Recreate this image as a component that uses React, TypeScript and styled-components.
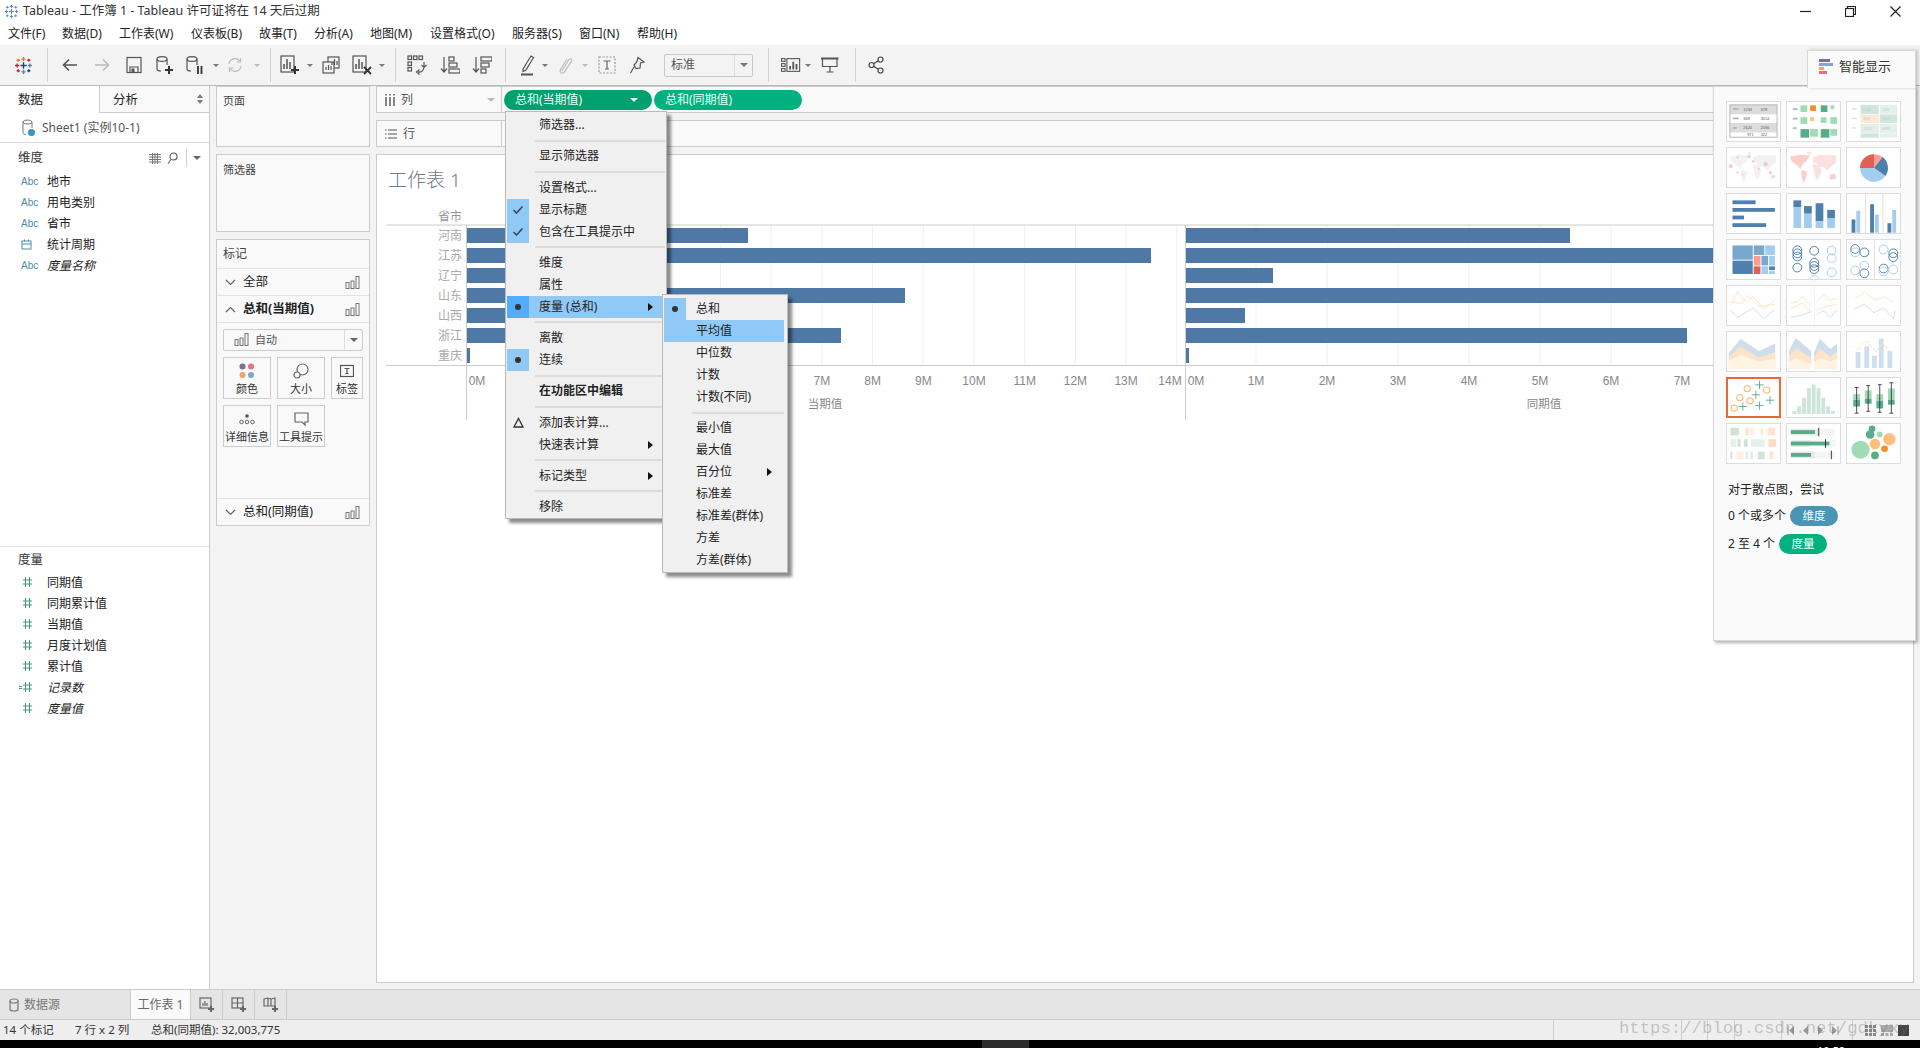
import React from "react";
import styled, { createGlobalStyle } from "styled-components";

const FONT = `"Noto Sans", "Noto Sans CJK SC", "Liberation Sans", sans-serif`;
const Global = createGlobalStyle`
  html, body { margin: 0; padding: 0; overflow: hidden; background: #fff; }
  * { box-sizing: border-box; }
  body { font-family: ${FONT}; font-size: 12px; color: #222; }
`;

const Page = styled.div`position: relative; width: 1920px; height: 1048px; display: flex; flex-direction: column; overflow: hidden; line-height: 1;`;
const TitleBar = styled.div`height: 22px; display: flex; align-items: center; background: #fff; padding-left: 4px; gap: 4px; font-size: 12.5px; color: #333;`;
const WindowButtons = styled.div`margin-left: auto; display: flex; align-items: center; padding-right: 19px; gap: 34px;`;
const MenuBar = styled.div`height: 23px; display: flex; align-items: center; background: #fff; font-size: 12px; padding-left: 8px;`;
const MenuEntry = styled.span<{ $w: number }>`width: ${p => p.$w}px; white-space: nowrap; color: #222;`;
const Toolbar = styled.div`height: 41px; display: flex; align-items: center; background: #f3f3f3; border-bottom: 1px solid #b9b9b9; padding-left: 13px;`;
const Tool = styled.div<{ $ml: number; $w?: number }>`margin-left: ${p => p.$ml}px; width: ${p => p.$w ?? 20}px; height: 24px; display: flex; align-items: center; justify-content: center; flex: none;`;
const ToolSep = styled.div<{ $ml: number }>`margin-left: ${p => p.$ml}px; width: 1px; height: 34px; background: #d0d0d0; flex: none;`;
const HeadSep = styled.div`margin-left: 2px; width: 1px; height: 18px; background: #d0d0d0; flex: none;`;
const Caret = styled.i<{ $c?: string; $s?: number }>`display: block; width: 0; height: 0; border-left: ${p => p.$s ?? 4}px solid transparent; border-right: ${p => p.$s ?? 4}px solid transparent; border-top: ${p => p.$s ?? 4}px solid ${p => p.$c ?? "#777"};`;
const SelectBox = styled.div`margin-left: 17px; width: 89px; height: 23px; flex: none; display: flex; align-items: center; background: #f3f3f3; border: 1px solid #c9c9c9; border-radius: 2px; padding-left: 6px; font-size: 12px; color: #555;`;
const SelectArrow = styled.div`margin-left: auto; width: 18px; height: 100%; border-left: 1px solid #ddd; display: flex; align-items: center; justify-content: center;`;

const Main = styled.div`height: 903px; display: flex; background: #f3f3f3;`;
const LeftPanel = styled.div`width: 210px; flex: none; background: #fff; border-right: 1px solid #ccc; display: flex; flex-direction: column;`;
const TabsRow = styled.div`height: 27px; display: flex;`;
const DataTab = styled.div`width: 100px; padding: 8px 0 0 18px; font-size: 12.5px; background: #fff; border-right: 1px solid #ccc;`;
const AnalysisTab = styled.div`flex: 1; padding: 8px 0 0 13px; font-size: 12.5px; background: #f9f9f9; border-bottom: 1px solid #ccc; display: flex; justify-content: space-between; padding-right: 6px;`;
const SheetRow = styled.div`height: 30px; display: flex; align-items: center; gap: 7px; padding-left: 22px; border-bottom: 1px solid #ddd; color: #555; font-size: 12px;`;
const SectionHead = styled.div`height: 28px; padding-top: 2px; display: flex; align-items: center; padding-left: 18px; padding-right: 8px; font-size: 12.5px; color: #333;`;
const HeadTools = styled.div`margin-left: auto; display: flex; align-items: center; gap: 6px;`;
const FieldList = styled.div<{ $h: number }>`height: ${p => p.$h}px; display: flex; flex-direction: column;`;
const Field = styled.div<{ $it?: boolean }>`height: 21px; flex: none; display: flex; align-items: center; font-style: ${p => (p.$it ? "italic" : "normal")}; color: #222;`;
const FieldIcon = styled.span<{ $pl?: number }>`width: 47px; padding-left: ${p => p.$pl ?? 21}px; flex: none; display: flex; color: #4a8ba8; font-size: 10px; font-family: "Liberation Sans", sans-serif; font-style: normal;`;
const MeasureHead = styled(SectionHead)`border-top: 1px solid #e2e2e2; height: 26px; padding-top: 2px;`;

const MidColumn = styled.div`width: 166px; flex: none; padding: 0 6px; display: flex; flex-direction: column; gap: 7px;`;
const Card = styled.div<{ $h: number }>`height: ${p => p.$h}px; flex: none; background: #f9f9f9; border: 1px solid #ccc; display: flex; flex-direction: column;`;
const CardTitle = styled.div<{ $pt?: number }>`padding: ${p => p.$pt ?? 9}px 0 0 6px; font-size: 11px; color: #444;`;
const MarksTitle = styled.div`height: 29px; display: flex; align-items: center; padding-left: 6px; font-size: 12px; color: #444; border-bottom: 1px solid #e2e2e2;`;
const MarkRow = styled.div<{ $b?: boolean }>`height: 27px; display: flex; align-items: center; padding: 0 9px 0 8px; font-size: 12.5px; font-weight: ${p => (p.$b ? 700 : 400)}; border-bottom: 1px solid #e2e2e2; gap: 7px; color: #222;`;
const MarkEnd = styled.span`margin-left: auto; display: flex;`;
const MarkBody = styled.div`flex: 1; padding: 6px 6px 0; display: flex; flex-direction: column;`;
const MarkSelect = styled.div`height: 22px; background: #f9f9f9; border: 1px solid #ccc; border-radius: 2px; display: flex; align-items: center; padding-left: 10px; padding-bottom: 1px; gap: 6px; font-size: 11px; color: #555;`;
const MarkSelectArrow = styled.div`margin-left: auto; width: 18px; height: 100%; border-left: 1px solid #ddd; display: flex; align-items: center; justify-content: center;`;
const MarkButtons = styled.div`margin-top: 6px; display: grid; grid-template-columns: 48px 48px 32px; grid-auto-rows: 42px; gap: 6px;`;
const MarkButton = styled.div`border: 1px solid #ccc; background: #f9f9f9; display: flex; flex-direction: column; align-items: center; padding-top: 5px; gap: 4px; font-size: 11px; color: #333; white-space: nowrap;`;
const MarkFoot = styled(MarkRow)`border-bottom: none; border-top: 1px solid #e2e2e2; height: 27px;`;

const Work = styled.div`flex: 1; min-width: 0; display: flex; flex-direction: column; padding-right: 6px; gap: 7px;`;
const Shelf = styled.div`height: 27px; flex: none; display: flex; border: 1px solid #ccc; background: #f9f9f9;`;
const ShelfLabel = styled.div`width: 125px; flex: none; display: flex; align-items: center; gap: 6px; padding: 0 6px 0 8px; font-size: 12px; color: #555; border-right: 1px solid #ccc;`;
const ShelfCaret = styled.span`margin-left: auto;`;
const ShelfBody = styled.div`flex: 1; display: flex; align-items: center; gap: 2px; padding-left: 2px;`;
const Pill = styled.div<{ $bg: string; $w: number }>`width: ${p => p.$w}px; height: 20px; border-radius: 10px; background: ${p => p.$bg}; color: #e8fff6; font-size: 12px; display: flex; align-items: center; padding: 0 14px 0 11px; justify-content: space-between;`;
const View = styled.div`height: 829px; flex: none; background: #fff; border: 1px solid #ccc;`;
const SheetTitle = styled.div`height: 35px; padding: 16px 0 0 11px; font-size: 19px; color: #6e7b85; font-weight: 300;`;
const ChartSvg = styled.svg`display: block;`;

const TabBar = styled.div`height: 31px; display: flex; background: #e5e5e5; border-top: 1px solid #ccc; border-bottom: 1px solid #ccc;`;
const SourceTab = styled.div`width: 131px; display: flex; align-items: center; gap: 4px; padding-left: 8px; color: #777; font-size: 12px; border-right: 1px solid #ccc;`;
const ActiveTab = styled.div`width: 60px; background: #fafafa; display: flex; align-items: center; justify-content: center; color: #666; font-size: 12px; border-right: 1px solid #ccc;`;
const NewTab = styled.div`width: 32px; display: flex; align-items: center; justify-content: center; border-right: 1px solid #ccc;`;
const StatusBar = styled.div`height: 20px; display: flex; align-items: center; background: #eee; font-size: 11.5px; color: #333;`;
const StatusText = styled.span<{ $w: number }>`width: ${p => p.$w}px; flex: none; white-space: nowrap;`;
const StatusCell = styled.div<{ $w: number }>`width: ${p => p.$w}px; height: 100%; flex: none; border-left: 1px solid #ccc; display: flex; align-items: center; justify-content: center; gap: 5px;`;
const StatusSpacer = styled.div`flex: 1;`;
const Watermark = styled.div`position: absolute; left: 1619px; top: 1019px; font-family: "Liberation Mono", monospace; font-size: 17.3px; color: rgba(110, 110, 110, 0.36); white-space: nowrap; line-height: 20px;`;
const BlackBar = styled.div`height: 8px; background: #000; display: flex; overflow: hidden;`;
const TaskSlot = styled.div`margin-left: 982px; width: 47px; background: #2b2b2b;`;
const Clock = styled.div`margin-left: 788px; color: #fff; font-size: 11px; padding-top: 5px;`;

const PopMenu = styled.div`position: absolute; left: 505px; top: 111px; width: 162px; background: #f0f0f0; border: 1px solid #b9b9b9; padding: 2px 1px 0; box-shadow: 4px 4px 3px rgba(0, 0, 0, 0.45); z-index: 5;`;
const SubMenu = styled.div`position: absolute; left: 156px; top: 182px; width: 126px; background: #f0f0f0; border: 1px solid #b9b9b9; padding: 3px 3px 1px 1px; box-shadow: 4px 4px 3px rgba(0, 0, 0, 0.45); z-index: 6;`;
const Row = styled.div<{ $hi?: boolean; $b?: boolean }>`height: 22px; display: flex; align-items: center; background: ${p => (p.$hi ? "#90c8f6" : "transparent")}; font-weight: ${p => (p.$b ? 700 : 400)}; color: #222; font-size: 12px; white-space: nowrap;`;
const Gutter = styled.span<{ $on?: "on" | "strong" }>`width: 22px; height: 100%; flex: none; display: flex; align-items: center; justify-content: center; background: ${p => (p.$on === "strong" ? "#52adfd" : p.$on === "on" ? "#90c8f6" : "transparent")}; margin-right: 10px;`;
const Dot = styled.i`width: 6px; height: 6px; border-radius: 50%; background: #333; display: block;`;
const Arrow = styled.i`margin-left: auto; margin-right: 12px; display: block; width: 0; height: 0; border-top: 4px solid transparent; border-bottom: 4px solid transparent; border-left: 5px solid #111;`;
const Sep = styled.div`height: 9.25px; display: flex; align-items: center; padding-left: 28px; &::after { content: ""; display: block; flex: 1; height: 2px; background: #dcdcdc; }`;

const Smart = styled.div`position: absolute; left: 1713px; top: 86px; width: 203px; height: 555px; background: #fafafa; border: 1px solid #d8d8d8; box-shadow: 2px 2px 3px rgba(0, 0, 0, 0.3); padding: 14px 0 0 12px; z-index: 4;`;
const SmartTab = styled.div`position: absolute; right: -1px; top: -37px; width: 109px; height: 38px; background: #fafafa; border: 1px solid #d8d8d8; border-bottom: none; box-shadow: 2px 0 3px rgba(0, 0, 0, 0.2); display: flex; align-items: center; gap: 5px; padding: 0 0 7px 11px; font-size: 13px; color: #333;`;
const SmartGrid = styled.div`display: grid; grid-template-columns: repeat(3, 55px); grid-auto-rows: 41px; gap: 5px;`;
const Thumb = styled.div<{ $sel?: boolean }>`border: ${p => (p.$sel ? "2px solid #e06c37" : "1px solid #ddd")}; background: #fff; display: flex; overflow: hidden;`;
const Hint = styled.div`margin-top: 18px; display: flex; flex-direction: column; gap: 8px; font-size: 12px; color: #222; padding-left: 2px;`;
const HintTitle = styled.div`height: 16px; display: flex; align-items: center; white-space: nowrap;`;
const HintRow = styled.div`display: flex; align-items: center; gap: 4px; height: 20px; white-space: nowrap;`;
const HintPill = styled.span<{ $bg: string }>`width: 48px; height: 20px; border-radius: 10px; background: ${p => p.$bg}; color: #f2fff9; display: flex; align-items: center; justify-content: center; font-size: 11.5px;`;

const Ico = ({ w = 18, h = 18, vb = "0 0 18 18", c = "#555", sw = 1.2, children }: { w?: number; h?: number; vb?: string; c?: string; sw?: number; children: React.ReactNode }) => (
  <svg width={w} height={h} viewBox={vb} fill="none" stroke={c} strokeWidth={sw}>{children}</svg>
);
const Logo = ({ blue = false, s = 18 }: { blue?: boolean; s?: number }) => {
  const c = blue ? ["#5b8fc0", "#5b8fc0", "#5b8fc0", "#5b8fc0"] : ["#e8762b", "#c72035", "#59879b", "#1f457e"];
  const P = (x: number, y: number, r: number, col: string) => <path d={`M${x - r} ${y}H${x + r}M${x} ${y - r}V${y + r}`} stroke={col} strokeWidth={1.3} />;
  return (
    <svg width={s} height={s} viewBox="0 0 18 18" fill="none">
      {P(9, 9, 3, c[3])}{P(9, 3, 2, c[0])}{P(9, 15, 2, c[2])}{P(3, 9, 2, c[1])}{P(15, 9, 2, c[2])}{P(4, 4, 1.5, c[0])}{P(14, 4, 1.5, c[1])}{P(4, 14, 1.5, c[1])}{P(14, 14, 1.5, c[3])}
    </svg>
  );
};
const BarsIcon = ({ c = "#777" }: { c?: string }) => (
  <Ico w={15} h={13} vb="0 0 15 13" c={c} sw={1}><rect x="1" y="6.5" width="3" height="6" /><rect x="6" y="5" width="3" height="7.5" /><rect x="11" y="0.5" width="3" height="12" /></Ico>
);
const Cyl = ({ c = "#666" }: { c?: string }) => <Ico w={12} h={14} vb="0 0 12 14" c={c}><ellipse cx="6" cy="3" rx="4" ry="2" /><path d="M2 3v8c0 1.2 2 2 4 2s4-.8 4-2V3" /></Ico>;
const SheetPlus = () => <Ico w={16} h={16} vb="0 0 16 16" c="#666"><rect x="1" y="1" width="11" height="10" /><path d="M4 9V6M6 9V4M8 9V6" /><path d="M12 9v6M9 12h6" strokeWidth={2} /></Ico>;

const toolIcons: Record<string, React.ReactNode> = {
  back: <Ico><path d="M16 9H3M8 3.5L2.5 9L8 14.5" strokeWidth={1.6} /></Ico>,
  fwd: <Ico c="#bbb"><path d="M2 9h13M10 3.5L15.5 9L10 14.5" strokeWidth={1.6} /></Ico>,
  save: <Ico><rect x="2" y="1.5" width="14" height="15" /><path d="M5 16V11h8v5" /><rect x="6.5" y="12.5" width="3" height="3.5" fill="#555" stroke="none" /></Ico>,
  dsadd: <Ico w={20} h={20} vb="0 0 20 20"><ellipse cx="7" cy="4" rx="5" ry="2.4" /><path d="M2 4v10c0 1.3 2 2 4 2M12 4v6" /><path d="M14 11v8M10 15h8" strokeWidth={2} stroke="#333" /></Ico>,
  dspause: <Ico w={20} h={20} vb="0 0 20 20"><ellipse cx="6" cy="4" rx="5" ry="2.4" /><path d="M1 4v10c0 1.3 2 2 4 2M11 4v6" /><path d="M12 11v8M15.5 11v8" strokeWidth={1.8} stroke="#333" /></Ico>,
  refresh: <Ico c="#bbb"><path d="M3 8a6 6 0 0 1 11-2.5M15 10a6 6 0 0 1-11 2.5" /><path d="M14.5 2v4h-4M3.5 16v-4h4" /></Ico>,
  add: <Ico w={20} h={20} vb="0 0 20 20"><rect x="1" y="1" width="13" height="16" /><path d="M4 14V9M7 14V4M10 14V7" strokeWidth={1.5} /><path d="M15 11v8M11 15h8" strokeWidth={2} stroke="#333" /></Ico>,
  dup: <Ico><rect x="6" y="1" width="11" height="11" /><rect x="1" y="6" width="11" height="11" fill="#f3f3f3" /><path d="M10 9V6M12.5 9V3M15 9V5M4 14v-3M6.5 14V9M9 14v-4" /></Ico>,
  clear: <Ico w={20} h={20} vb="0 0 20 20"><rect x="1" y="1" width="13" height="16" /><path d="M4 14V9M7 14V4M10 14V7" strokeWidth={1.5} /><path d="M12 12l7 7M19 12l-7 7" strokeWidth={1.8} stroke="#333" /></Ico>,
  swap: <Ico w={20} h={20} vb="0 0 20 20"><rect x="1" y="1" width="3.5" height="3.5" /><rect x="6.5" y="1" width="3.5" height="3.5" /><rect x="12" y="1" width="3.5" height="3.5" /><rect x="1" y="7" width="3.5" height="3.5" /><rect x="1" y="12.5" width="3.5" height="3.5" /><path d="M17 7v5a5 5 0 0 1-6 5M14.5 10l2.5 2.5l2.5-2.5M12.5 14.5L9.5 17l3 2.5" /></Ico>,
  asc: <Ico w={20} h={20} vb="0 0 20 20"><path d="M4 2v15M1 13.5L4 17l3-3.5" /><rect x="9" y="2" width="5" height="4" /><rect x="9" y="8" width="8" height="4" /><rect x="9" y="14" width="11" height="4" /></Ico>,
  desc: <Ico w={20} h={20} vb="0 0 20 20"><path d="M4 2v15M1 13.5L4 17l3-3.5" /><rect x="9" y="2" width="11" height="4" /><rect x="9" y="8" width="8" height="4" /><rect x="9" y="14" width="5" height="4" /></Ico>,
  pen: <Ico w={16} h={22} vb="0 0 16 22"><path d="M3 15L11 2l2.5 1.5L6 16l-3 1.5z" /><rect x="1" y="19.5" width="12" height="2" fill="#555" stroke="none" /></Ico>,
  clip: <Ico c="#c4c4c4" sw={1.4}><path d="M6 15L13 3.5c1-1.6 3.5-.4 2.6 1.4L8.5 16c-1.8 2.3-5.5.5-4-2.3L11 3" /></Ico>,
  t: <Ico c="#999"><rect x="1" y="1" width="16" height="16" strokeDasharray="2 1.5" /><path d="M5.5 5h7M9 5v8M7 13h4" stroke="#666" /></Ico>,
  pin: <Ico><path d="M10 1.5l6 4.5-3.5 1-.5 5-4 .5-2-3.5 3-3.5zM6 11l-3.5 6" /></Ico>,
  view: <Ico w={22} h={16} vb="0 0 22 16"><rect x="0.5" y="1" width="4" height="3" /><rect x="0.5" y="6.5" width="4" height="3" /><rect x="0.5" y="12" width="4" height="3" /><rect x="6.5" y="1" width="14" height="14" /><path d="M10 13V9M13.5 13V4.5M17 13V7" strokeWidth={2} /></Ico>,
  present: <Ico w={18} h={16} vb="0 0 18 16"><path d="M0 1.5h17.5" strokeWidth={2} /><path d="M1.5 2v7.5h14.5V2M9 9.5V15M5.5 15h7" /></Ico>,
  share: <Ico c="#444"><circle cx="12.5" cy="3.5" r="2.5" /><circle cx="3.5" cy="9" r="2.5" /><circle cx="12.5" cy="14.5" r="2.5" /><path d="M5.6 7.7l4.8-3M5.6 10.3l4.8 3" /></Ico>,
};

const toolbar: [string, number][] = [
  ["logo", 0], ["sep", 14], ["back", 12], ["fwd", 12], ["save", 12], ["dsadd", 11], ["dspause", 11], ["c", 6], ["refresh", 5], ["cl", 8], ["sep", 9],
  ["add", 9], ["c", 6], ["dup", 7], ["clear", 11], ["c", 6], ["sep", 9], ["swap", 11], ["asc", 13], ["desc", 12], ["sep", 13], ["pen", 12], ["c", 3], ["clip", 6], ["cl", 6], ["t", 8], ["pin", 10],
  ["select", 0], ["sep", 15], ["view", 12], ["c", 3], ["present", 8], ["sep", 15], ["share", 11],
];

const menuNames: [string, number][] = [["文件(F)", 54], ["数据(D)", 57], ["工作表(W)", 72], ["仪表板(B)", 68], ["故事(T)", 55], ["分析(A)", 56], ["地图(M)", 60], ["设置格式(O)", 82], ["服务器(S)", 67], ["窗口(N)", 58], ["帮助(H)", 60]];

const Check = () => <Ico w={12} h={10} vb="0 0 12 10" c="#3a4a5a" sw={1.6}><path d="M1.5 5l3 3L10.5 1.5" /></Ico>;
const Delta = () => <svg width="11" height="11" viewBox="0 0 11 11" fill="none" stroke="#333" strokeWidth="1.3"><path d="M5.5 1.5L10 10H1z" /></svg>;

const Hash = ({ eq }: { eq?: boolean }) => (
  <svg width="24" height="13" viewBox="0 0 24 13" fill="none" stroke="#3f9a78" strokeWidth="1">
    {eq && <path d="M0 5.5h3M0 7.5h3" />}
    <path d="M6.5 1v10M10.5 1v10M4 4h9M4 8h9" />
  </svg>
);
const CalIcon = () => <Ico w={11} h={11} vb="0 0 11 11" c="#4a8ba8" sw={1}><rect x="1" y="2" width="9" height="8" /><path d="M1 5h9M3.5 0.5v2M7.5 0.5v2" /></Ico>;

/* thumbnails */
const B = "#4e80ae", L = "#a3cdef", M = "#7aa7cc", G = "#58ad88", LG = "#9fdbb4", PG = "#cde5d9", O = "#f68e24", LO = "#ffc07f", R = "#e15f55", PK = "#ff9c93", PO = "#fde3c8", PB = "#cfdeec", VPO = "#fff3e3";
type RectT = [number, number, number, number, string];
const Rs = ({ r }: { r: RectT[] }) => <>{r.map(([x, y, w, h, f], i) => <rect key={i} x={x} y={y} width={w} height={h} fill={f} />)}</>;
const Circles = ({ c }: { c: [number, number, string][] }) => <>{c.map(([x, y, s], i) => <circle key={i} cx={x} cy={y} r={4.6} fill="none" stroke={s} strokeWidth={1} />)}</>;
const Line = ({ p, c, w = 1 }: { p: string; c: string; w?: number }) => <polyline points={p} fill="none" stroke={c} strokeWidth={w} />;
const Slice = ({ a, b, f }: { a: number; b: number; f: string }) => {
  const rad = (d: number) => ((d - 90) * Math.PI) / 180;
  const cx = 28, cy = 21, r = 14.5;
  const pt = (d: number) => `${cx + r * Math.cos(rad(d))} ${cy + r * Math.sin(rad(d))}`;
  return <path d={`M${cx} ${cy}L${pt(a)}A${r} ${r} 0 ${b - a > 180 ? 1 : 0} 1 ${pt(b)}Z`} fill={f} />;
};
const World = ({ f, f2 }: { f: string; f2: string }) => (
  <g fill={f}>
    <path d="M3 9L14 7L24 8L20 14L16 17L14 22L10 18L5 14Z" fill={f2} />
    <path d="M15 23L21 25L19 33L17 37L15 30Z" fill={f2} />
    <path d="M20 4L26 4L23 8Z" />
    <path d="M27 10L34 7L51 8L51 15L45 20L42 24L38 20L34 20L31 16L27 15Z" />
    <path d="M26 17L33 18L36 23L33 32L30 33L28 24Z" />
    <path d="M44 28L50 27L51 32L45 33Z" fill={f2} />
  </g>
);
const TT = styled.text`font-family: "Liberation Sans", sans-serif; font-size: 4px;`;

const thumbs: React.ReactNode[] = [
  <><Rs r={[[3, 3, 49, 10, "#dcdcdc"], [3, 22, 49, 10, "#dcdcdc"], [6, 6.5, 6, 1.6, "#aaa"], [6, 16.5, 6, 1.6, "#aaa"], [6, 26.5, 4, 1.6, "#aaa"]]} /><rect x="3" y="3" width="49" height="34" fill="none" stroke="#b5b5b5" />
    <g fill="#555"><TT x="17" y="9">1234</TT><TT x="35" y="9">678</TT><TT x="17" y="19">368</TT><TT x="35" y="19">3014</TT><TT x="17" y="28">2620</TT><TT x="35" y="28">2556</TT><TT x="21" y="36">971</TT><TT x="35" y="36">322</TT></g></>,
  <Rs r={[[6, 6.5, 5, 2, "#bbb"], [6, 16.5, 5, 2, "#bbb"], [6, 26.5, 4, 2, "#bbb"], [14, 3.5, 7, 7, LG], [24, 3.5, 6, 6, O], [35, 3.5, 7, 7, G], [45, 3.5, 4, 4, LG], [14, 16, 7, 7, LG], [24, 16, 4, 4, LO], [35, 16, 6, 6, LG], [45, 16, 7, 7, LG], [14, 28.5, 9, 9, G], [24, 28.5, 8, 8, LG], [35, 28.5, 9, 9, G], [45, 28.5, 7, 7, LG]]} />,
  <><Rs r={[[3, 3, 10, 35, "#fff"], [14, 3, 19, 9.5, "#d0e6dc"], [34, 3, 18, 9.5, "#e4f1ea"], [14, 13, 19, 9, "#ffe9d6"], [34, 13, 18, 9, "#d0e6dc"], [14, 23, 19, 9.5, "#e4f1ea"], [34, 23, 18, 9.5, "#e4f1ea"], [14, 33, 19, 4.5, "#d0e6dc"], [34, 33, 18, 4.5, "#e4f1ea"], [5, 6.5, 5, 1.5, "#ddd"], [5, 16.5, 5, 1.5, "#ddd"], [5, 26.5, 4, 1.5, "#ddd"]]} />
    <g fill="#bcc"><TT x="16" y="9">1234</TT><TT x="37" y="9">546</TT><TT x="17" y="19">368</TT><TT x="37" y="19">340</TT><TT x="17" y="29">2620</TT><TT x="36" y="29">5690</TT></g></>,
  <><World f="#f2f2f2" f2="#f2f2f2" />{[[4, 19, 2], [11, 10, 1.2], [23, 9, 1.6], [27, 14, 1.2], [40, 17, 2.2], [45, 26, 1.6], [11, 26, 1.2], [16, 28, 1], [48, 30, 1.2], [33, 22, 1]].map(([x, y, r], i) => <circle key={i} cx={x} cy={y} r={r} fill="#f4c6c4" />)}</>,
  <World f="#fde0e0" f2="#f8cfcb" />,
  <><Slice a={0} b={38} f={PK} /><Slice a={38} b={125} f={B} /><Slice a={125} b={270} f={L} /><Slice a={270} b={360} f={R} /></>,
  <Rs r={[[5.7, 6.7, 24, 4, B], [5.7, 14.7, 44, 4, B], [5.7, 22.7, 12, 4, B], [5.7, 30.7, 35, 4, B]]} />,
  <Rs r={[[6.7, 6.7, 8, 7, B], [6.7, 13.7, 8, 22, L], [17.7, 12.7, 8, 8, B], [17.7, 20.7, 8, 15, L], [29.7, 9.7, 8, 19, B], [29.7, 28.7, 8, 7, L], [41.7, 16.7, 8, 9, B], [41.7, 25.7, 8, 10, L]]} />,
  <Rs r={[[19, 0, 0.6, 41, "#ccc"], [37, 0, 0.6, 41, "#ccc"], [4.7, 26.7, 4, 14, B], [9.7, 17.7, 4, 23, L], [24, 10.7, 4, 30, B], [29, 21.7, 4, 19, L], [42, 30.7, 4, 10, B], [47, 16.7, 4, 24, L]]} />,
  <Rs r={[[5.7, 5.7, 21, 15, M], [5.7, 21.7, 21, 14, B], [27.7, 5.7, 11, 10, M], [39.7, 5.7, 10, 10, L], [27.7, 16.7, 7, 10, PK], [35.7, 16.7, 7, 10, M], [43.7, 16.7, 6, 10, L], [27.7, 27.7, 7, 8, R], [35.7, 27.7, 7, 8, L], [43.7, 27.7, 6, 4, B], [43.7, 32.7, 6, 3, L]]} />,
  <Circles c={[[10.7, 10.7, B], [10.7, 14, B], [10.7, 17.3, B], [10.7, 29, B], [28.3, 11.3, B], [28.3, 24, B], [28.3, 27.3, B], [28.3, 30.7, B], [28.3, 42, L], [46.3, 11.3, L], [46.3, 19, L], [46.3, 34, L]]} />,
  <><Rs r={[[28, 0, 0.6, 41, "#ccc"]]} /><Circles c={[[8.5, 9.5, B], [8.5, 13, L], [18, 13, B], [18, 27, L], [8.5, 32, L], [18, 35, B], [38, 10, L], [48, 14, B], [48, 18, B], [38, 30, B], [38, 33, L], [48, 31, L]]} /></>,
  <><Line p="4,20 11,6 20,17 27,11 38,24 50,14" c={PO} /><Line p="4,16 14,19 22,10 34,22 50,19" c={PO} /><Line p="4,26 11,33 27,23 38,34 50,25" c={PB} /></>,
  <><Rs r={[[28, 0, 0.5, 41, "#e8e8e8"]]} /><Line p="4,18 11,16 16,11 25,21" c={PO} /><Line p="4,24 16,18 25,28" c={PO} /><Line p="4,33 14,31 25,27" c={PB} /><Line p="31,17 38,9 45,15 52,13" c={PO} /><Line p="31,25 39,22 52,19" c={PO} /><Line p="31,30 38,26 45,33 52,25" c={PB} /></>,
  <><Rs r={[[2, 5, 3, 0.6, "#eee"], [2, 12, 3, 0.6, "#eee"], [2, 20, 3, 0.6, "#eee"], [2, 28, 3, 0.6, "#eee"], [50, 5, 3, 0.6, "#eee"], [50, 12, 3, 0.6, "#eee"], [50, 20, 3, 0.6, "#eee"], [50, 28, 3, 0.6, "#eee"]]} /><Line p="8,14 18,6 30,15 38,11 48,17" c={PO} /><Line p="8,24 18,19 28,28 38,23 48,34 50,26" c={PB} /></>,
  <><path d="M2 22L14 7L33 20L50 12V38H2Z" fill={PB} /><path d="M2 26L14 15L33 27L50 21V38H2Z" fill={PO} /><path d="M2 30L14 24L33 31L50 28V38H2Z" fill={VPO} /></>,
  <><path d="M2 20L9 6L25 20V38H2Z" fill={PB} /><path d="M2 26L9 17L25 27V38H2Z" fill={PO} /><path d="M2 31L9 27L25 33V38H2Z" fill={VPO} /><path d="M28 22L34 7L45 18L52 12V38H28Z" fill={PB} /><path d="M28 27L34 17L45 26L52 20V38H28Z" fill={PO} /><path d="M28 32L34 27L45 31L52 28V38H28Z" fill={VPO} /></>,
  <><Rs r={[[9, 21, 5, 17, PB], [18, 15, 5, 23, PB], [26, 25, 5, 13, PB], [33, 7, 5, 31, PB], [42, 20, 5, 18, PB], [2, 5, 3, 0.6, "#eee"], [2, 15, 3, 0.6, "#eee"], [2, 25, 3, 0.6, "#eee"], [50, 5, 3, 0.6, "#eee"], [50, 15, 3, 0.6, "#eee"], [50, 25, 3, 0.6, "#eee"]]} /><Line p="9,20 20,9 30,21 37,12 46,22" c={PO} /></>,
  <><g fill="none" stroke="#f9a34c" strokeWidth="1"><circle cx="20.7" cy="10.7" r="3.5" /><circle cx="41.7" cy="12.3" r="3.5" /><circle cx="12.7" cy="20.7" r="3.5" /><circle cx="23.7" cy="24.3" r="3.5" /><circle cx="6.7" cy="32.3" r="3.5" /></g>
    <path d="M34 2v9M29.5 6.5h9M30 13v9M25.5 17.5h9M45.3 19v9M40.8 23.5h9M16 26v9M11.5 30.5h9M34 25v9M29.5 29.5h9" stroke={G} strokeWidth="1" fill="none" /></>,
  <Rs r={[[5.7, 34.7, 4, 3, PG], [10.7, 29.7, 4, 8, PG], [15.7, 20.7, 4, 17, PG], [20.7, 10.7, 4, 27, PG], [25.7, 6.7, 4, 31, PG], [30.7, 10.7, 4, 27, PG], [35.7, 20.7, 4, 17, PG], [40.7, 29.7, 4, 8, PG], [45.7, 34.7, 4, 3, PG]]} />,
  <><Rs r={[[6.5, 17, 7, 6, LG], [6.5, 23, 7, 7, G], [18.5, 13, 7, 9, LG], [18.5, 22, 7, 5, G], [30.5, 17, 7, 7, LG], [30.5, 24, 7, 8, G], [42.5, 11, 7, 12, LG], [42.5, 23, 7, 5, G]]} /><path d="M10 10v27M8 10h4M8 37h4M22 8v27M20 8h4M20 35h4M34 7v29M32 7h4M32 36h4M46 5v32M44 5h4M44 37h4" stroke="#333" strokeWidth="0.9" fill="none" /></>,
  <Rs r={[[3.5, 4, 9, 8, PG], [19, 4, 4, 8, "#ffe5cf"], [24, 4, 4, 8, "#fff0e2"], [35, 4, 2, 8, "#ffe5cf"], [42, 4, 8, 8, "#ffe5cf"], [3.5, 16, 6, 8, "#e4f1ea"], [11, 16, 3, 8, PG], [17.5, 16, 4, 8, PG], [25, 16, 14, 8, "#e4f1ea"], [43, 16, 8, 8, "#ffdcc0"], [3.5, 29, 2, 8, PG], [9, 29, 8, 8, "#fff0e2"], [19, 29, 3, 8, "#e4f1ea"], [24, 29, 3, 8, "#e4f1ea"], [32, 29, 7, 8, PG], [44, 29, 4, 8, "#ffe5cf"]]} />,
  <Rs r={[[4, 5, 46, 7, "#f5f5f5"], [4, 5, 30, 7, "#e8e8e8"], [4, 6.5, 25, 4, G], [32.5, 4, 0.9, 9, "#222"], [4, 17, 46, 7, "#f5f5f5"], [4, 17, 20, 7, "#e8e8e8"], [4, 18.5, 40, 4, G], [39.5, 16, 0.9, 9, "#222"], [4, 29, 46, 7, "#f5f5f5"], [4, 29, 25, 7, "#e8e8e8"], [4, 30.5, 21, 4, G], [45.5, 28, 0.9, 9, "#222"]]} />,
  <>{[[15, 27, 9.5, LG], [27, 5, 3.5, G], [25, 11, 4.5, G], [30, 21, 5.5, LO], [35, 11, 3, LG], [45, 16, 6.5, LO], [40, 26, 3.5, O], [30, 33, 4, G]].map(([x, y, r, f], i) => <circle key={i} cx={(x as number) - 1} cy={y as number} r={r as number} fill={f as string} />)}</>,
];

const rows: [string, number, number][] = [["河南", 748, 1570], ["江苏", 1151, 1713], ["辽宁", 600, 1273], ["山东", 905, 1713], ["山西", 560, 1245], ["浙江", 841, 1687], ["重庆", 470, 1189]];

const Chart = () => (
  <ChartSvg width="1535" height="260" viewBox="377 190 1535 260">
    <g stroke="#f0f0f0">
      {Array.from({ length: 14 }, (_, i) => <line key={i} x1={467 + (i + 1) * 50.7} x2={467 + (i + 1) * 50.7} y1="225" y2="365" />)}
      {Array.from({ length: 7 }, (_, i) => <line key={i} x1={1185 + (i + 1) * 71} x2={1185 + (i + 1) * 71} y1="225" y2="365" />)}
    </g>
    <g fontFamily={`"Noto Sans CJK SC", sans-serif`} fontSize="12" fill="#aaa" textAnchor="end">
      <text x="462" y="221" fill="#999">省市</text>
      {rows.map(([n], i) => <text key={n} x="462" y={240 + i * 20}>{n}</text>)}
    </g>
    {rows.map(([n, a, b], i) => (
      <g key={n} fill="#4e79a7">
        <rect x="467" y={228 + i * 20} width={a - 467} height="15" />
        <rect x="1186" y={228 + i * 20} width={b - 1186} height="15" />
      </g>
    ))}
    <g stroke="#ccc">
      <line x1="386" x2="1912" y1="225" y2="225" />
      <line x1="386" x2="1912" y1="365.5" y2="365.5" />
      <line x1="466.5" x2="466.5" y1="225" y2="420" />
      <line x1="1185.5" x2="1185.5" y1="225" y2="420" />
    </g>
    <g fontFamily={`"Liberation Sans", sans-serif`} fontSize="12" fill="#888" textAnchor="middle">
      <text x="477" y="385">0M</text>
      {[7, 8, 9, 10, 11, 12, 13, 14].map(m => <text key={m} x={m === 14 ? 1170 : 467 + m * 50.7} y="385">{m}M</text>)}
      {[0, 1, 2, 3, 4, 5, 6, 7].map(m => <text key={m} x={m === 0 ? 1196 : 1185 + m * 71} y="385">{m}M</text>)}
    </g>
    <g fontFamily={`"Noto Sans CJK SC", sans-serif`} fontSize="11.5" fill="#888" textAnchor="middle">
      <text x="825" y="408">当期值</text>
      <text x="1544" y="408">同期值</text>
    </g>
  </ChartSvg>
);

const dims: [string, string | null, boolean][] = [["地市", "Abc", false], ["用电类别", "Abc", false], ["省市", "Abc", false], ["统计周期", null, false], ["度量名称", "Abc", true]];
const measures: [string, boolean, boolean][] = [["同期值", false, false], ["同期累计值", false, false], ["当期值", false, false], ["月度计划值", false, false], ["累计值", false, false], ["记录数", true, true], ["度量值", false, true]];
const Chev = ({ up }: { up?: boolean }) => <Ico w={11} h={7} vb="0 0 11 7" c="#666"><path d={up ? "M1 6l4.5-4.5L10 6" : "M1 1l4.5 4.5L10 1"} /></Ico>;

export default function App() {
  return (
    <Page>
      <Global />
      <TitleBar>
        <Logo blue s={15} />
        <span>Tableau - 工作簿 1 - Tableau 许可证将在 14 天后过期</span>
        <WindowButtons>
          <Ico w={11} h={11} vb="0 0 11 11" c="#222"><path d="M0 5.5h11" /></Ico>
          <Ico w={11} h={11} vb="0 0 11 11" c="#222"><rect x="0.5" y="2.5" width="8" height="8" /><path d="M2.5 2.5V0.5h8v8h-2" /></Ico>
          <Ico w={11} h={11} vb="0 0 11 11" c="#222"><path d="M0.5 0.5l10 10M10.5 0.5l-10 10" /></Ico>
        </WindowButtons>
      </TitleBar>
      <MenuBar>{menuNames.map(([n, w]) => <MenuEntry key={n} $w={w}>{n}</MenuEntry>)}</MenuBar>
      <Toolbar>
        {toolbar.map(([k, ml], i) => {
          if (k === "sep") return <ToolSep key={i} $ml={ml} />;
          if (k === "c" || k === "cl") return <Tool key={i} $ml={ml} $w={8}><Caret $s={3} $c={k === "c" ? "#777" : "#bbb"} /></Tool>;
          if (k === "select") return <SelectBox key={i}>标准<SelectArrow><Caret $s={4} /></SelectArrow></SelectBox>;
          if (k === "logo") return <Tool key={i} $ml={ml}><Logo s={19} /></Tool>;
          return <Tool key={i} $ml={ml}>{toolIcons[k]}</Tool>;
        })}
      </Toolbar>
      <Main>
        <LeftPanel>
          <TabsRow>
            <DataTab>数据</DataTab>
            <AnalysisTab>分析<svg width="6" height="10" viewBox="0 0 6 10" fill="#777"><path d="M3 0L6 4H0zM3 10L0 6h6z" /></svg></AnalysisTab>
          </TabsRow>
          <SheetRow>
            <svg width="13" height="18" viewBox="0 0 13 18" fill="none" stroke="#777"><ellipse cx="5.5" cy="3" rx="4.5" ry="2" /><path d="M1 3v11c0 1 2 1.5 3 1.5M10 3v6" /><circle cx="9.5" cy="13.5" r="3.5" fill="#3f8fc4" stroke="none" /></svg>
            Sheet1 (实例10-1)
          </SheetRow>
          <SectionHead>
            维度
            <HeadTools>
              <Ico w={12} h={11} vb="0 0 12 11" c="#777" sw={1}><path d="M0 1.5h12M0 4h12M0 6.5h12M0 9h12M3.5 0v11M6 0v11M8.5 0v11" /></Ico>
              <Ico w={11} h={12} vb="0 0 11 12" c="#555" sw={1.1}><circle cx="6.5" cy="4.5" r="3.5" /><path d="M4 7.5L1 11.5" /></Ico>
              <HeadSep />
              <Caret $s={4} $c="#666" />
            </HeadTools>
          </SectionHead>
          <FieldList $h={375}>
            {dims.map(([n, ic, it]) => (
              <Field key={n} $it={it}><FieldIcon>{ic ?? <CalIcon />}</FieldIcon>{n}</Field>
            ))}
          </FieldList>
          <MeasureHead>度量</MeasureHead>
          <FieldList $h={200}>
            {measures.map(([n, eq, it]) => (
              <Field key={n} $it={it}><FieldIcon $pl={19}><Hash eq={eq} /></FieldIcon>{n}</Field>
            ))}
          </FieldList>
        </LeftPanel>
        <MidColumn>
          <Card $h={61}><CardTitle $pt={8}>页面</CardTitle></Card>
          <Card $h={78}><CardTitle>筛选器</CardTitle></Card>
          <Card $h={287}>
            <MarksTitle>标记</MarksTitle>
            <MarkRow><Chev />全部<MarkEnd><BarsIcon /></MarkEnd></MarkRow>
            <MarkRow $b><Chev up />总和(当期值)<MarkEnd><BarsIcon /></MarkEnd></MarkRow>
            <MarkBody>
              <MarkSelect><BarsIcon />自动<MarkSelectArrow><Caret $s={4} $c="#666" /></MarkSelectArrow></MarkSelect>
              <MarkButtons>
                <MarkButton>
                  <svg width="18" height="16" viewBox="0 0 18 16"><circle cx="4.5" cy="3.5" r="3" fill="#7d6b99" /><circle cx="13" cy="3.5" r="3" fill="#f16b82" /><circle cx="4.5" cy="12" r="3" fill="#f0a36c" /><circle cx="13" cy="12" r="3" fill="#7fa6d1" /></svg>
                  颜色
                </MarkButton>
                <MarkButton>
                  <Ico w={16} h={16} vb="0 0 16 16" c="#666"><circle cx="9.5" cy="6.5" r="5.5" /><circle cx="4" cy="12" r="3" fill="#f9f9f9" /></Ico>
                  大小
                </MarkButton>
                <MarkButton>
                  <Ico w={14} h={16} vb="0 0 14 14" c="#555"><rect x="0.5" y="1.5" width="13" height="11" /><path d="M4.5 4.5h5M7 4.5v5M5.5 9.5h3" /></Ico>
                  标签
                </MarkButton>
                <MarkButton>
                  <svg width="16" height="16" viewBox="0 0 16 16" fill="none" stroke="#666"><circle cx="8" cy="5" r="1.8" fill="#555" stroke="none" /><circle cx="2.5" cy="11" r="1.8" /><circle cx="8" cy="11" r="1.8" /><circle cx="13.5" cy="11" r="1.8" /></svg>
                  详细信息
                </MarkButton>
                <MarkButton>
                  <Ico w={15} h={16} vb="0 0 15 15" c="#666"><path d="M1 1.5h13v9h-3v3l-3-3H1z" /></Ico>
                  工具提示
                </MarkButton>
              </MarkButtons>
            </MarkBody>
            <MarkFoot><Chev />总和(同期值)<MarkEnd><BarsIcon /></MarkEnd></MarkFoot>
          </Card>
        </MidColumn>
        <Work>
          <Shelf>
            <ShelfLabel>
              <Ico w={10} h={12} vb="0 0 10 12" c="#555" sw={1.4}><path d="M1 3v9M5 3v9M9 3v9" /><path d="M1 0v1.5M5 0v1.5M9 0v1.5" /></Ico>
              列<ShelfCaret><Caret $s={4} $c="#bbb" /></ShelfCaret>
            </ShelfLabel>
            <ShelfBody>
              <Pill $bg="#00a06f" $w={148}>总和(当期值)<Caret $s={4} $c="#fff" /></Pill>
              <Pill $bg="#00b180" $w={148}>总和(同期值)</Pill>
            </ShelfBody>
          </Shelf>
          <Shelf>
            <ShelfLabel>
              <Ico w={12} h={10} vb="0 0 12 10" c="#555" sw={1.1}><path d="M3 1h9M3 5h9M3 9h9M0 1h1.5M0 5h1.5M0 9h1.5" /></Ico>
              行
            </ShelfLabel>
            <ShelfBody />
          </Shelf>
          <View>
            <SheetTitle>工作表 1</SheetTitle>
            <Chart />
          </View>
        </Work>
      </Main>
      <TabBar>
        <SourceTab><Cyl c="#777" />数据源</SourceTab>
        <ActiveTab>工作表 1</ActiveTab>
        <NewTab><SheetPlus /></NewTab>
        <NewTab><Ico w={16} h={16} vb="0 0 16 16" c="#666"><rect x="1" y="1" width="11" height="10" /><path d="M1 6h11M6.5 1v10" /><path d="M12 9v6M9 12h6" strokeWidth={2} /></Ico></NewTab>
        <NewTab><Ico w={16} h={16} vb="0 0 16 16" c="#666"><path d="M1 2l3.5-1 3.5 1 4-1v8H1z" /><path d="M5 1v8M8 2v7" /><path d="M12 9v6M9 12h6" strokeWidth={2} /></Ico></NewTab>
      </TabBar>
      <StatusBar>
        <StatusText $w={3} />
        <StatusText $w={72}>14 个标记</StatusText>
        <StatusText $w={76}>7 行 x 2 列</StatusText>
        <StatusText $w={200}>总和(同期值): 32,003,775</StatusText>
        <StatusSpacer />
        <StatusCell $w={128} />
        <StatusCell $w={26} />
        <StatusCell $w={27} />
        <StatusCell $w={47} />
        <StatusCell $w={71}>
          <svg width="60" height="9" viewBox="0 0 60 9" fill="#999"><path d="M7 0L2 4.5 7 9zM21 0l-5 4.5 5 4.5zM31 0l5 4.5L31 9zM45 0l5 4.5L45 9z" /><rect x="0.5" y="0" width="1" height="9" /><rect x="50.5" y="0" width="1" height="9" /></svg>
        </StatusCell>
        <StatusCell $w={68}>
          <svg width="11" height="11" viewBox="0 0 11 11" fill="#888"><path d="M0 0h3v3H0zM4 0h3v3H4zM8 0h3v3H8zM0 4h3v3H0zM4 4h3v3H4zM8 4h3v3H8zM0 8h3v3H0zM4 8h3v3H4zM8 8h3v3H8z" /></svg>
          <svg width="12" height="11" viewBox="0 0 12 11" fill="#aaa"><path d="M0 0h12v7H0zM0 8h3v3H0zM4.500 8h3v3h-3zM9 8h3v3H9z" /></svg>
          <svg width="11" height="11" viewBox="0 0 11 11" fill="#444"><path d="M0 0h11v11H0z" /></svg>
        </StatusCell>
      </StatusBar>
      <BlackBar><TaskSlot /><Clock>10:59</Clock></BlackBar>
      <Watermark>https://blog.csdn.net/gdkyxy</Watermark>

      <PopMenu>
        <Row><Gutter />筛选器...</Row>
        <Sep />
        <Row><Gutter />显示筛选器</Row>
        <Sep />
        <Row><Gutter />设置格式...</Row>
        <Row><Gutter $on="on"><Check /></Gutter>显示标题</Row>
        <Row><Gutter $on="on"><Check /></Gutter>包含在工具提示中</Row>
        <Sep />
        <Row><Gutter />维度</Row>
        <Row><Gutter />属性</Row>
        <Row $hi><Gutter $on="strong"><Dot /></Gutter>度量 (总和)<Arrow /></Row>
        <Sep />
        <Row><Gutter />离散</Row>
        <Row><Gutter $on="on"><Dot /></Gutter>连续</Row>
        <Sep />
        <Row $b><Gutter />在功能区中编辑</Row>
        <Sep />
        <Row><Gutter><Delta /></Gutter>添加表计算...</Row>
        <Row><Gutter />快速表计算<Arrow /></Row>
        <Sep />
        <Row><Gutter />标记类型<Arrow /></Row>
        <Sep />
        <Row><Gutter />移除</Row>
        <SubMenu>
          <Row><Gutter $on="on"><Dot /></Gutter>总和</Row>
          <Row $hi><Gutter />平均值</Row>
          <Row><Gutter />中位数</Row>
          <Row><Gutter />计数</Row>
          <Row><Gutter />计数(不同)</Row>
          <Sep />
          <Row><Gutter />最小值</Row>
          <Row><Gutter />最大值</Row>
          <Row><Gutter />百分位<Arrow /></Row>
          <Row><Gutter />标准差</Row>
          <Row><Gutter />标准差(群体)</Row>
          <Row><Gutter />方差</Row>
          <Row><Gutter />方差(群体)</Row>
        </SubMenu>
      </PopMenu>

      <Smart>
        <SmartTab>
          <svg width="15" height="15" viewBox="0 0 15 15"><rect x="0" y="0" width="11" height="3" fill="#7d6b99" /><rect x="0" y="4" width="14" height="3" fill="#7fa6d1" /><rect x="0" y="8" width="5" height="3" fill="#f0a36c" /><rect x="0" y="12" width="8" height="3" fill="#f16b82" /></svg>
          智能显示
        </SmartTab>
        <SmartGrid>
          {thumbs.map((t, i) => (
            <Thumb key={i} $sel={i === 18}><svg width="100%" height="100%" viewBox="0 0 55 41" preserveAspectRatio="none">{t}</svg></Thumb>
          ))}
        </SmartGrid>
        <Hint>
          <HintTitle>对于散点图，尝试</HintTitle>
          <HintRow>0 个或多个<HintPill $bg="#4a94b4">维度</HintPill></HintRow>
          <HintRow>2 至 4 个<HintPill $bg="#00b180">度量</HintPill></HintRow>
        </Hint>
      </Smart>
    </Page>
  );
}
